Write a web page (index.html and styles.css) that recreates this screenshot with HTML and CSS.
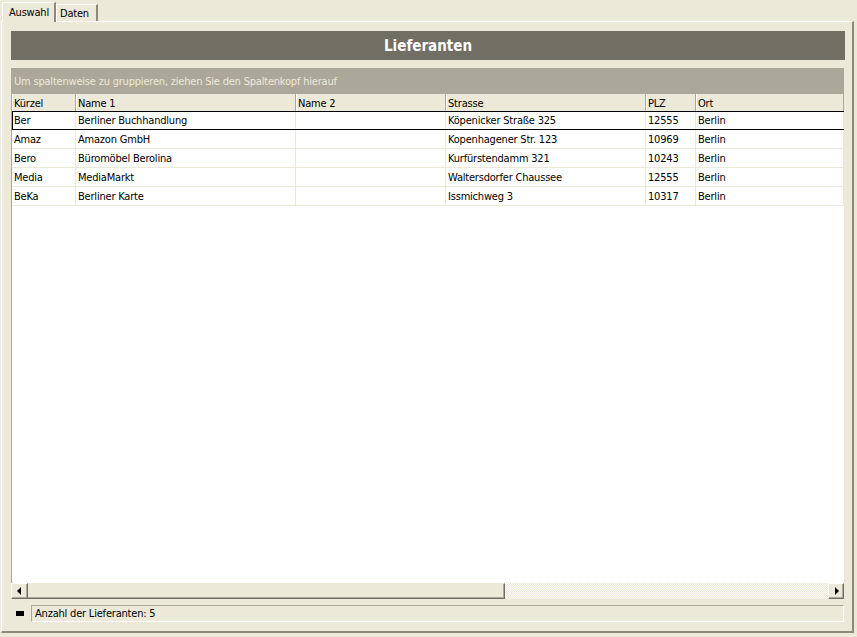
FILE: index.html
```html
<!DOCTYPE html>
<html lang="de">
<head>
<meta charset="utf-8">
<title>Lieferanten</title>
<link rel="stylesheet" href="styles.css">
</head>
<body>
<div class="tabs">
  <div class="tab tab-active">Auswahl</div>
  <div class="tab tab-daten">Daten</div>
</div>
<div class="panel">
  <div class="title">Lieferanten</div>
  <div class="groupby">Um spaltenweise zu gruppieren, ziehen Sie den Spaltenkopf hierauf</div>
  <div class="grid">
    <div class="row head">
      <div class="cell">Kürzel</div>
      <div class="cell">Name 1</div>
      <div class="cell">Name 2</div>
      <div class="cell">Strasse</div>
      <div class="cell">PLZ</div>
      <div class="cell">Ort</div>
    </div>
    <div class="body">
      <div class="row data current">
        <div class="cell">Ber</div>
        <div class="cell">Berliner Buchhandlung</div>
        <div class="cell"></div>
        <div class="cell">Köpenicker Straße 325</div>
        <div class="cell">12555</div>
        <div class="cell">Berlin</div>
      </div>
      <div class="row data">
        <div class="cell">Amaz</div>
        <div class="cell">Amazon GmbH</div>
        <div class="cell"></div>
        <div class="cell">Kopenhagener Str. 123</div>
        <div class="cell">10969</div>
        <div class="cell">Berlin</div>
      </div>
      <div class="row data">
        <div class="cell">Bero</div>
        <div class="cell">Büromöbel Berolina</div>
        <div class="cell"></div>
        <div class="cell">Kurfürstendamm 321</div>
        <div class="cell">10243</div>
        <div class="cell">Berlin</div>
      </div>
      <div class="row data">
        <div class="cell">Media</div>
        <div class="cell">MediaMarkt</div>
        <div class="cell"></div>
        <div class="cell">Waltersdorfer Chaussee</div>
        <div class="cell">12555</div>
        <div class="cell">Berlin</div>
      </div>
      <div class="row data">
        <div class="cell">BeKa</div>
        <div class="cell">Berliner Karte</div>
        <div class="cell"></div>
        <div class="cell">Issmichweg 3</div>
        <div class="cell">10317</div>
        <div class="cell">Berlin</div>
      </div>
    </div>
    <div class="hscroll">
      <div class="sbtn"><span class="arrow-left"></span></div>
      <div class="thumb"></div>
      <div class="track"></div>
      <div class="sbtn sbtn-right"><span class="arrow-right"></span></div>
    </div>
  </div>
  <div class="status">
    <div class="status-icon"><span class="square"></span></div>
    <div class="status-box">Anzahl der Lieferanten: 5</div>
  </div>
</div>
</body>
</html>
```

FILE: styles.css
```css
* { box-sizing: border-box; }

html, body {
  margin: 0;
  padding: 0;
  height: 637px;
  overflow: hidden;
}

body {
  background: #ECE9D8;
  font-family: "DejaVu Sans Condensed", "Liberation Sans", sans-serif;
  font-size: 11px;
  letter-spacing: -0.2px;
  color: #000;
  display: flex;
  flex-direction: column;
}

.tabs {
  height: 22px;
  display: flex;
  align-items: flex-end;
  padding-left: 2px;
  margin-bottom: -1px;
}

.tab {
  background: #ECE9D8;
  border-top: 1px solid #fff;
  border-left: 1px solid #fff;
  border-right: 2px solid #8d8a7d;
  padding-left: 3px;
}

.tab-active {
  position: relative;
  z-index: 1;
  width: 54px;
  height: 20px;
  padding-left: 6px;
  padding-top: 2px;
  line-height: 15px;
}

.tab-daten {
  width: 42px;
  height: 17px;
  margin-bottom: 1px;
  padding-top: 2px;
  line-height: 14px;
}

.panel {
  flex: 1;
  margin: 0 3px 4px 1px;
  border-top: 1px solid #fff;
  border-left: 1px solid #fff;
  border-right: 2px solid #8d8a7d;
  border-bottom: 2px solid #8d8a7d;
  padding: 9px 7px 9px 9px;
  display: flex;
  flex-direction: column;
}

.title {
  height: 29px;
  background: #716F64;
  color: #fff;
  font-weight: bold;
  font-size: 15px;
  letter-spacing: 0;
  display: flex;
  align-items: center;
  justify-content: center;
  margin-bottom: 8px;
}

.groupby {
  height: 26px;
  margin-right: 1px;
  background: #ACA899;
  color: #ECE9D8;
  padding-left: 3px;
  padding-top: 1px;
  display: flex;
  align-items: center;
}

.grid {
  flex: 1;
  margin-right: 1px;
  display: flex;
  flex-direction: column;
}

.row {
  display: grid;
  grid-template-columns: 64px 220px 150px 200px 50px 148px;
  border-left: 1px solid #ACA899;
}

.head {
  height: 17px;
  background: #ECE9D8;
}

.head .cell {
  border-right: 1px solid #ACA899;
  box-shadow: inset 1px 0 0 #fff;
  padding: 3px 0 0 2px;
  line-height: 14px;
}

.body {
  flex: 1;
  background: #fff;
  border-left: 1px solid #ACA899;
}

.body .row {
  border-left: 0;
}

.data {
  height: 19px;
  border-bottom: 1px solid #ECE9D8;
}

.data .cell {
  border-right: 1px solid #ECE9D8;
  padding-left: 2px;
  padding-top: 2px;
  line-height: 16px;
  white-space: nowrap;
  overflow: hidden;
}

.data.current {
  border-top: 1px solid #000;
  border-bottom: 1px solid #000;
  box-shadow: inset 1px 0 0 #000;
}

.data.current .cell {
  padding-top: 1px;
  line-height: 16px;
}

.hscroll {
  height: 16px;
  display: flex;
}

.sbtn {
  width: 17px;
  background: #ECE9D8;
  border-top: 1px solid #fff;
  border-left: 1px solid #fff;
  border-right: 1px solid #716F64;
  border-bottom: 1px solid #716F64;
  box-shadow: inset -1px -1px 0 #ACA899;
  display: flex;
  align-items: center;
  justify-content: center;
}

.sbtn-right {
  width: 16px;
}

.arrow-left {
  width: 0;
  height: 0;
  border-top: 4px solid transparent;
  border-bottom: 4px solid transparent;
  border-right: 4px solid #000;
  margin-left: -2px;
}

.arrow-right {
  width: 0;
  height: 0;
  border-top: 4px solid transparent;
  border-bottom: 4px solid transparent;
  border-left: 4px solid #000;
  margin-left: 1px;
}

.thumb {
  width: 477px;
  background: #ECE9D8;
  border-top: 1px solid #ECE9D8;
  border-right: 1px solid #716F64;
  border-bottom: 1px solid #716F64;
  box-shadow: inset -1px -1px 0 #ACA899;
}

.track {
  flex: 1;
  background: repeating-conic-gradient(#ECE9D8 0 25%, #fbfaf6 0 50%) 0 0 / 2px 2px;
}

.status {
  margin-top: 6px;
  height: 17px;
  display: flex;
}

.status-icon {
  width: 20px;
  display: flex;
  align-items: center;
  padding-left: 5px;
}

.square {
  display: block;
  width: 8px;
  height: 5px;
  background: #000;
}

.status-box {
  flex: 1;
  margin-right: 1px;
  border-top: 1px solid #ACA899;
  border-left: 1px solid #ACA899;
  border-right: 1px solid #fff;
  border-bottom: 1px solid #fff;
  padding-left: 3px;
  padding-top: 1px;
  line-height: 14px;
}
```
